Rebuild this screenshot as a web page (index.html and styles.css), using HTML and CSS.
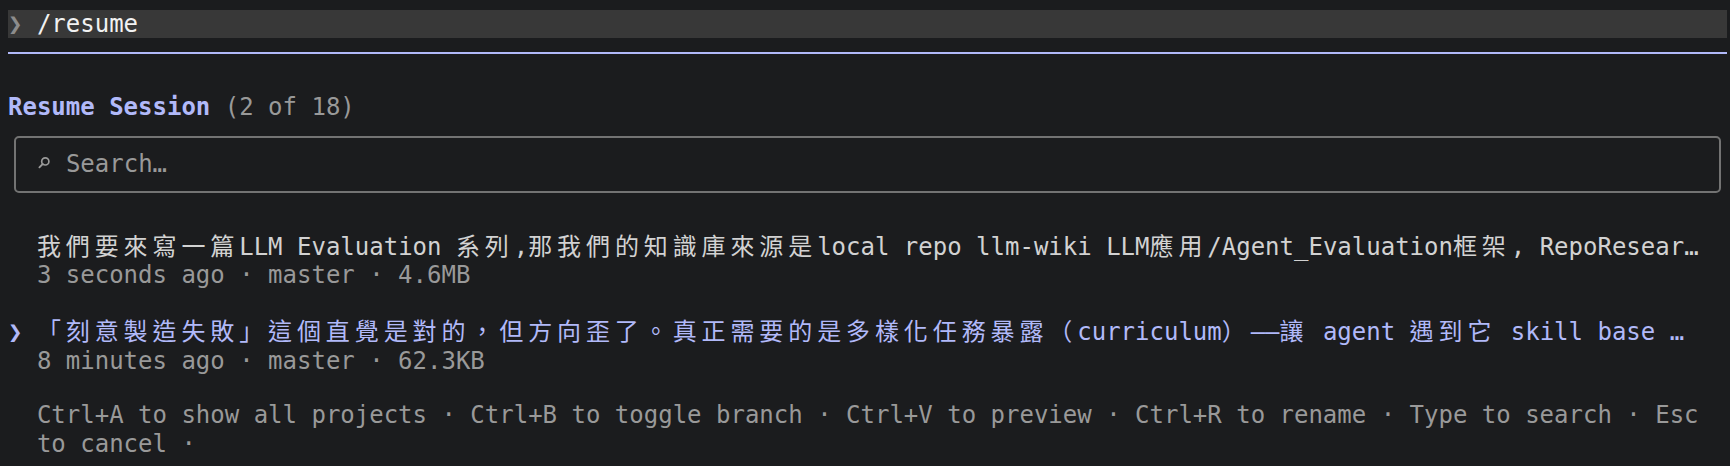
FILE: index.html
```html
<!DOCTYPE html>
<html lang="zh-Hant">
<head>
<meta charset="utf-8">
<title>/resume</title>
<link rel="stylesheet" href="styles.css">
</head>
<body>
<main class="term">
  <div class="prompt"><span class="chev">❯</span> /resume</div>
  <div class="rule"></div>

  <div class="title"><b class="accent">Resume Session</b> <span class="dim">(2 of 18)</span></div>

  <div class="search"><svg class="icon" viewBox="0 0 14.45 28.5" aria-hidden="true"><circle cx="8.3" cy="11.4" r="3.6" fill="none" stroke="#9a9a9a" stroke-width="1.7"/><line x1="5.7" y1="14" x2="2.4" y2="17.3" stroke="#9a9a9a" stroke-width="1.8" stroke-linecap="round"/></svg> <span class="dim">Search…</span></div>

  <ul class="sessions">
    <li class="session">
      <span class="marker"></span>
      <span class="name"><span class="w">我們要來寫一篇</span>LLM Evaluation <span class="w">系列</span>,<span class="w">那我們的知識庫來源是</span>local repo llm-wiki LLM<span class="w">應用</span>/Agent_Evaluation<span class="w">框架</span>, RepoResear…</span>
      <span class="meta">3 seconds ago · master · 4.6MB</span>
    </li>
    <li class="session selected">
      <span class="marker">❯</span>
      <span class="name"><span class="w">「刻意製造失敗」這個直覺是對的，但方向歪了。真正需要的是多樣化任務暴露（</span>curriculum<span class="w">）</span>——<span class="w">讓</span> agent <span class="w">遇到它</span> skill base …</span>
      <span class="meta">8 minutes ago · master · 62.3KB</span>
    </li>
  </ul>

  <p class="help">Ctrl+A to show all projects · Ctrl+B to toggle branch · Ctrl+V to preview · Ctrl+R to rename · Type to search · Esc to cancel ·</p>
</main>
</body>
</html>
```

FILE: styles.css
```css
html, body {
  margin: 0;
  background: #1b1c1e;
}

body {
  padding: 10px 0 0 8px;
  font-family: "DejaVu Sans Mono", "Noto Sans CJK TC", monospace;
  font-size: 24px;
  line-height: 28.5px;
  color: #d2d2d2;
}

.term {
  width: 119ch;
}

.prompt {
  height: 28px;
  line-height: 28px;
  background: #383838;
  color: #f2f2f2;
  white-space: pre;
}

.chev {
  color: #8c8c8c;
}

.rule {
  margin-top: 14px;
  height: 2px;
  background: #b1b9f9;
}

.title {
  margin-top: 39px;
  white-space: pre;
}

.accent {
  color: #b1b9f9;
  font-weight: bold;
}

.dim {
  color: #999999;
}

.search {
  margin: 14.5px 6px 0 6px;
  border: 2px solid #737373;
  border-radius: 5px;
  padding: 12px 0 12.5px 21px;
  white-space: pre;
  height: 28.5px;
}

.icon {
  display: inline-block;
  width: 1ch;
  height: 28.5px;
  vertical-align: top;
}

.sessions {
  list-style: none;
  margin: 39.5px 0 0 0;
  padding: 0;
  display: flex;
  flex-direction: column;
  gap: 28.5px;
}

.session {
  display: grid;
  grid-template-columns: 2ch 1fr;
  white-space: pre;
}

.marker {
  grid-row: 1;
  grid-column: 1;
}

.name {
  grid-row: 1;
  grid-column: 2;
  color: #d2d2d2;
}

.meta {
  grid-row: 2;
  grid-column: 2;
  color: #999999;
}

.selected .marker,
.selected .name {
  color: #b1b9f9;
}

.w {
  letter-spacing: calc(2ch - 1em);
}

.help {
  margin: 26.25px 0 0 0;
  padding-left: 2ch;
  max-width: 117ch;
  color: #999999;
}
```
